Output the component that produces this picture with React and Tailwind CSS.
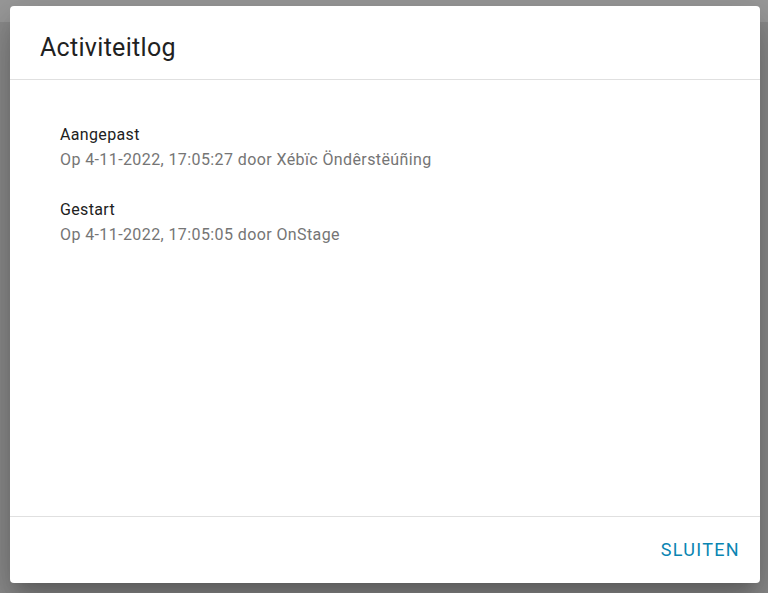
export default function App() {
  const items = [
    { title: "Aangepast", sub: "Op 4-11-2022, 17:05:27 door Xébïc Öndêrstëúñing" },
    { title: "Gestart", sub: "Op 4-11-2022, 17:05:05 door OnStage" },
  ];
  return (
    <div className="relative w-[768px] h-[593px] bg-[#8c8c8c] overflow-hidden" style={{ fontFamily: "Roboto, 'Liberation Sans', sans-serif" }}>
      <div className="h-[22px] bg-[#9a9a9a]" />
      <div className="absolute left-[10px] top-[6px] w-[750px] h-[577px] bg-white rounded-[4px] flex flex-col shadow-[0_11px_15px_-7px_rgba(0,0,0,0.2),0_24px_38px_3px_rgba(0,0,0,0.14),0_9px_46px_8px_rgba(0,0,0,0.12)]">
        <div className="h-[74px] pt-[29px] px-[30px] border-b border-[#e0e0e0] shrink-0">
          <h1 className="text-[25px] tracking-[0.3px] text-[#212121] font-normal leading-[25px]">Activiteitlog</h1>
        </div>
        <div className="flex-1 px-[50px] pt-[45px] flex flex-col gap-[31px]">
          {items.map((it) => (
            <div key={it.title} className="flex flex-col gap-[6px]">
              <div className="text-[16px] leading-[19px] tracking-[0.35px] text-[#212121]">{it.title}</div>
              <div className="text-[16px] leading-[19px] tracking-[0.4px] text-[#757575]">{it.sub}</div>
            </div>
          ))}
        </div>
        <div className="h-[67px] border-t border-[#e0e0e0] flex items-center justify-end pr-[20px] shrink-0">
          <button className="text-[18px] tracking-[1.3px] text-[#0a85b2] font-normal uppercase leading-none">Sluiten</button>
        </div>
      </div>
    </div>
  );
}
